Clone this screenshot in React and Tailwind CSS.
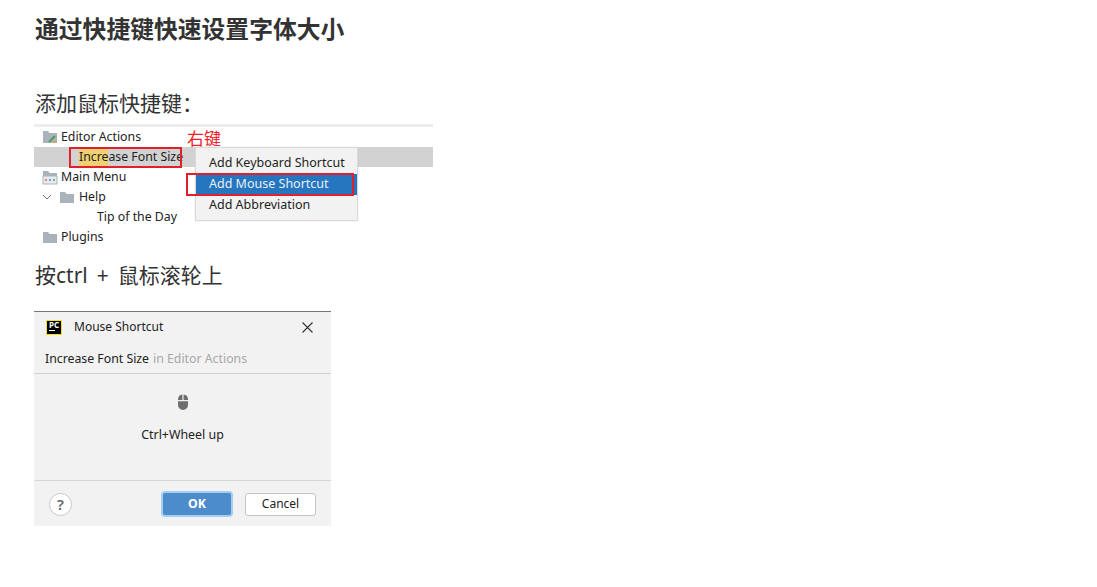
const cjk = '"Liberation Sans","Noto Sans CJK SC",sans-serif';

function Folder({ className = "" }) {
  return (
    <svg width="16" height="14" viewBox="0 0 16 14" className={className}>
      <path d="M1 2h5l1.5 2H15v9H1z" fill="#aab3bb" />
    </svg>
  );
}

function EditorIcon() {
  return (
    <svg width="16" height="14" viewBox="0 0 16 14">
      <path d="M1 1h5l1.5 2H15v10H1z" fill="#aab3bb" />
      <path d="M7 12l6-6" stroke="#4f9e5a" strokeWidth="2" />
      <path d="M11 12h3" stroke="#d9a53c" strokeWidth="1.5" />
    </svg>
  );
}

function MenuFolderIcon() {
  return (
    <svg width="16" height="15" viewBox="0 0 16 15">
      <path d="M1 1h5l1.5 2H15v3H1z" fill="#aab3bb" />
      <rect x="1" y="6" width="14" height="8" fill="#e8ebee" stroke="#aab3bb" />
      <rect x="3" y="9" width="2" height="2" fill="#d98a6a" />
      <rect x="7" y="9" width="2" height="2" fill="#6aa5d9" />
      <rect x="11" y="9" width="2" height="2" fill="#7ab97a" />
    </svg>
  );
}

function Row({ indent, icon, children, selected }) {
  return (
    <div className={`flex h-5 items-center ${selected ? "bg-[#d2d2d2]" : ""} ${indent}`}>
      {icon}
      {children}
    </div>
  );
}

function TreeShot() {
  return (
    <div className="relative ml-[-1px] mt-[4px] h-[123px] w-[399px] border-t-[3px] border-[#ededed] font-['Noto_Sans'] text-[12.3px] text-[#222]">
      <Row indent="pl-[8px]" icon={<EditorIcon />}>
        <span className="ml-[3px]">Editor Actions</span>
      </Row>
      <Row indent="pl-[45px]" selected>
        <span>
          <span className="rounded-[2px] bg-[#f0d070] py-[1px]">Incre</span>ase Font Size
        </span>
      </Row>
      <Row indent="pl-[8px]" icon={<MenuFolderIcon />}>
        <span className="ml-[3px]">Main Menu</span>
      </Row>
      <Row
        indent="pl-[8px]"
        icon={
          <>
            <svg width="10" height="10" viewBox="0 0 10 10" fill="none" stroke="#777">
              <path d="M1 3l4 4 4-4" />
            </svg>
            <Folder className="ml-[7px]" />
          </>
        }
      >
        <span className="ml-[4px]">Help</span>
      </Row>
      <Row indent="pl-[63px]">Tip of the Day</Row>
      <Row indent="pl-[8px]" icon={<Folder />}>
        <span className="ml-[3px]">Plugins</span>
      </Row>

      <div className="absolute left-[35px] top-[20px] h-[21px] w-[113px] border-2 border-[#e0202a]" />
      <span className="absolute left-[153px] top-[2px] text-[17px] leading-[22px] text-[#f0202a]" style={{ fontFamily: cjk }}>
        右键
      </span>
      <div className="absolute left-[161px] top-[20px] h-[74px] w-[163px] border border-[#d9d9d9] bg-[#f2f2f2] pt-[5px] text-[12.5px] shadow-[0_0_1px_#ccc]">
        <div className="flex h-[21px] items-center pl-[13px]">Add Keyboard Shortcut</div>
        <div className="flex h-[21px] items-center bg-[#2675bf] pl-[13px] text-[#e8f0f8]">Add Mouse Shortcut</div>
        <div className="flex h-[21px] items-center pl-[13px]">Add Abbreviation</div>
      </div>
      <div className="absolute left-[152px] top-[46px] h-[23px] w-[168px] border-2 border-[#e0202a]" />
    </div>
  );
}

function DialogShot() {
  return (
    <div className="ml-[-1px] mt-[19px] flex h-[215px] w-[297px] flex-col border-t border-[#777] bg-[#f2f2f2] font-['Noto_Sans'] text-[12.3px] text-[#222]">
      <div className="flex h-[30px] items-center pl-[12px] pr-[18px]">
        <div className="flex h-[15px] w-[16px] flex-col items-center border border-[#f5e020] bg-black text-[8px] font-bold leading-[8px] text-white">
          PC
          <div className="mr-[4px] mt-[1px] h-[1px] w-[6px] bg-white" />
        </div>
        <span className="ml-[12px] flex-1 text-[12px]">Mouse Shortcut</span>
        <svg width="11" height="11" viewBox="0 0 11 11" stroke="#333" strokeWidth="1.1">
          <path d="M0.5 0.5l10 10M10.5 0.5l-10 10" />
        </svg>
      </div>
      <div className="flex h-[32px] items-center border-b border-[#d0d0d0] pl-[11px] pt-[3px]">
        Increase Font Size<span className="ml-[4px] text-[#a8a8a8]">in Editor Actions</span>
      </div>
      <div className="flex h-[107px] flex-col items-center border-b border-[#d6d6d6] pt-[20px] text-[12.4px]">
        <svg width="12" height="16" viewBox="0 0 12 16">
          <path d="M1 5a5 5 0 0 1 4.4-4.5V6H1zM6.6 0.5A5 5 0 0 1 11 5v1H6.6zM1 7.2h10V11a5 5 0 0 1-10 0z" fill="#6e6e6e" />
        </svg>
        <span className="mt-[16px]">Ctrl+Wheel up</span>
      </div>
      <div className="flex flex-1 items-center pl-[15px] pr-[15px] pt-[1px]">
        <div className="flex h-[23px] w-[23px] items-center justify-center rounded-full border border-[#c8c8c8] bg-white text-[15px] font-semibold text-[#666]">
          ?
        </div>
        <div className="ml-auto flex h-[26px] w-[72px] items-center justify-center rounded-[4px] border-2 border-[#a6cdf2] bg-[#4d8ccb] font-bold text-white">
          OK
        </div>
        <div className="ml-[12px] flex h-[23px] w-[71px] items-center justify-center rounded-[3px] border border-[#c4c4c4] bg-white text-[12px]">
          Cancel
        </div>
      </div>
    </div>
  );
}

export default function App() {
  return (
    <div className="h-[587px] w-[1097px] overflow-hidden bg-white pl-[35px] pt-[13px] text-[#333]" style={{ fontFamily: cjk }}>
      <h1 className="text-[23.8px] font-bold leading-[33px]">通过快捷键快速设置字体大小</h1>
      <p className="mt-[41px] text-[21px] leading-[33px]">添加鼠标快捷键：</p>
      <TreeShot />
      <p className="mt-[12px] font-['Noto_Sans','Noto_Sans_CJK_SC',sans-serif] text-[21px] leading-[33px] [word-spacing:3.5px]">按ctrl + 鼠标滚轮上</p>
      <DialogShot />
    </div>
  );
}
